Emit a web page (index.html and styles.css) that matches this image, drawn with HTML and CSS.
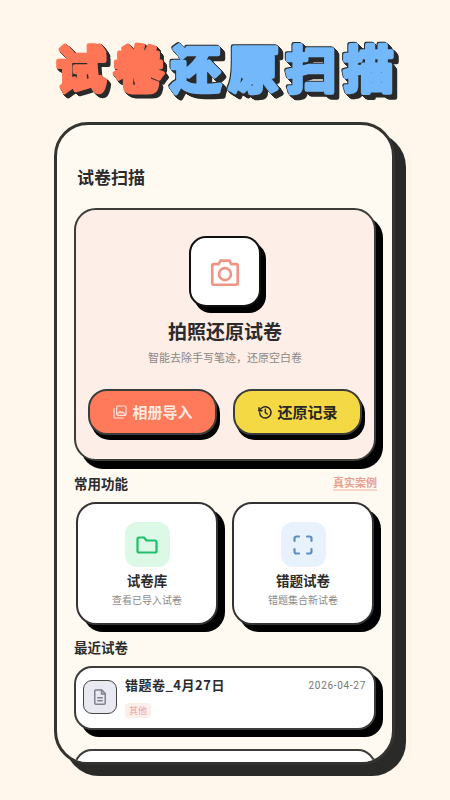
FILE: index.html
```html
<!DOCTYPE html>
<html lang="zh">
<head>
<meta charset="utf-8">
<title>试卷还原扫描</title>
<link rel="stylesheet" href="styles.css">
</head>
<body>
<header class="banner">
  <svg class="banner-art" width="450" height="122" viewBox="0 0 450 122" role="img" aria-label="试卷还原扫描">
    <text class="banner-word word-orange" x="56" y="88">试卷</text>
    <text class="banner-word word-blue" x="171" y="88">还原扫描</text>
  </svg>
</header>
<main class="phone">
  <h2 class="page-title">试卷扫描</h2>
  <section class="hero">
    <div class="hero-icon">
      <svg width="34" height="34" viewBox="0 0 24 24" fill="none" stroke="#ef9583" stroke-width="1.900" stroke-linejoin="round"><path d="M3 7.500a1 1 0 0 1 1-1h3.600l1.200-2.500h6.400l1.200 2.500H20a1 1 0 0 1 1 1V20a1 1 0 0 1-1 1H4a1 1 0 0 1-1-1z"/><circle cx="12" cy="13.500" r="4.200"/></svg>
    </div>
    <h3 class="hero-title">拍照还原试卷</h3>
    <p class="hero-sub">智能去除手写笔迹，还原空白卷</p>
    <div class="hero-actions">
      <button class="btn btn-orange">
        <svg width="16" height="16" viewBox="0 0 24 24" fill="none" stroke="#ffe3d8" stroke-width="1.800" stroke-linejoin="round" stroke-linecap="round"><rect x="7" y="3" width="14" height="14" rx="2"/><path d="M3 7v12a2 2 0 0 0 2 2h12"/><path d="M8 15l4-4 2.500 2.500L16 12l4 4"/></svg>
        相册导入
      </button>
      <button class="btn btn-yellow">
        <svg width="16" height="16" viewBox="0 0 24 24" fill="none" stroke="#262626" stroke-width="2.200" stroke-linejoin="round" stroke-linecap="round"><path d="M4 13a8.500 8.500 0 1 0 2.500-6.500L3 10"/><path d="M3 5.500V10h4.500"/><path d="M12.500 8v5l3 2"/></svg>
        还原记录
      </button>
    </div>
  </section>
  <div class="section-head"><h3 class="section-title">常用功能</h3><span class="section-link">真实案例</span></div>
  <div class="tools">
    <article class="tool">
      <div class="tool-icon tool-green">
        <svg width="24" height="24" viewBox="0 0 24 24" fill="none" stroke="#1fc06a" stroke-width="2.200" stroke-linejoin="round"><path d="M2.500 6a1.500 1.500 0 0 1 1.500-1.500h5l2.500 3H20a1.500 1.500 0 0 1 1.500 1.500v9a1.500 1.500 0 0 1-1.500 1.500H4A1.500 1.500 0 0 1 2.500 18z"/></svg>
      </div>
      <h4 class="tool-title">试卷库</h4>
      <p class="tool-sub">查看已导入试卷</p>
    </article>
    <article class="tool">
      <div class="tool-icon tool-blue">
        <svg width="24" height="24" viewBox="0 0 24 24" fill="none" stroke="#5b8fc4" stroke-width="2.200" stroke-linecap="round" stroke-linejoin="round"><path d="M3.500 8V5.500a2 2 0 0 1 2-2H8"/><path d="M16 3.500h2.500a2 2 0 0 1 2 2V8"/><path d="M20.500 16v2.500a2 2 0 0 1-2 2H16"/><path d="M8 20.500H5.500a2 2 0 0 1-2-2V16"/></svg>
      </div>
      <h4 class="tool-title">错题试卷</h4>
      <p class="tool-sub">错题集合新试卷</p>
    </article>
  </div>
  <h3 class="section-title recent-title">最近试卷</h3>
  <article class="paper">
    <div class="paper-icon">
      <svg width="18" height="18" viewBox="0 0 24 24" fill="none" stroke="#80808f" stroke-width="2" stroke-linejoin="round" stroke-linecap="round"><path d="M6 2.500h8l5 5V20a1.500 1.500 0 0 1-1.500 1.500h-11.500A1.500 1.500 0 0 1 5 20V4a1.500 1.500 0 0 1 1-1.500z"/><path d="M14 2.500V8h5"/><path d="M9 13h6M9 17h6"/></svg>
    </div>
    <div class="paper-body">
      <div class="paper-row"><span class="paper-name">错题卷_4月27日</span><span class="paper-date">2026-04-27</span></div>
      <span class="paper-tag">其他</span>
    </div>
  </article>
  <article class="paper paper-next"></article>
</main>
</body>
</html>
```
FILE: styles.css
```css
* { box-sizing: border-box; }
html, body { margin: 0; padding: 0; }
body {
  width: 450px;
  height: 800px;
  overflow: hidden;
  background: #fff6ec;
  font-family: "Noto Sans CJK SC", "Noto Sans", sans-serif;
  color: #2b2b2b;
}
h1, h2, h3, h4, p { margin: 0; }
.banner { height: 122px; }
.banner-art { display: block; }
.banner-word {
  font-family: "Noto Sans CJK SC", sans-serif;
  font-size: 50px;
  font-weight: 700;
  letter-spacing: 7.500px;
  stroke-width: 4.500px;
  stroke-linejoin: round;
  stroke-linecap: round;
  paint-order: stroke;
}
.word-orange {
  fill: #ff7657;
  stroke: #ff7657;
  filter: drop-shadow(1px 1px 0 #2a2a2a) drop-shadow(1px 1px 0 #2a2a2a) drop-shadow(1px 1px 0 #2a2a2a) drop-shadow(1px 1px 0 #2a2a2a);
}
.word-blue {
  fill: #72b8fb;
  stroke: #72b8fb;
  filter: drop-shadow(-1px -1px 0 #2a2a2a) drop-shadow(1px 1px 0 #2a2a2a) drop-shadow(1px 1px 0 #2a2a2a) drop-shadow(1px 1px 0 #2a2a2a) drop-shadow(1px 1px 0 #2a2a2a) drop-shadow(1px 1px 0 #2a2a2a);
}
.phone {
  width: 341px;
  height: 643px;
  margin-left: 54px;
  padding: 40px 17px 0 17px;
  background: #fffaf1;
  border: 3px solid #33332f;
  border-radius: 34px;
  box-shadow: 11px 11px 0 #2a2a28;
  overflow: hidden;
}
.page-title { font-size: 17px; line-height: 24px; font-weight: 700; margin-left: 3px; }
.hero {
  width: 302px;
  height: 253px;
  margin-top: 19px;
  padding-top: 26px;
  background: #fdeee8;
  border: 2px solid #3c3c3a;
  border-radius: 22px;
  box-shadow: 7px 8px 0 #000;
  display: flex;
  flex-direction: column;
  align-items: center;
}
.hero-icon {
  width: 72px;
  height: 71px;
  background: #fff;
  border: 2px solid #111;
  border-radius: 17px;
  box-shadow: 5px 6px 0 #000;
  display: flex;
  align-items: center;
  justify-content: center;
}
.hero-title { margin-top: 10px; font-size: 19px; line-height: 28px; font-weight: 700; }
.hero-sub { margin-top: 4px; font-size: 11px; line-height: 16px; color: #8c8684; }
.hero-actions { width: 274px; margin-top: 24px; display: flex; justify-content: space-between; }
.btn {
  width: 129px;
  height: 46px;
  border: 2px solid #3c3c3a;
  border-radius: 19px;
  box-shadow: 3px 5px 0 #000;
  font: 700 15px/20px "Noto Sans CJK SC", sans-serif;
  display: flex;
  align-items: center;
  justify-content: center;
  gap: 4px;
  padding: 0;
}
.btn-orange { background: #ff7a5a; color: #ffe9e0; }
.btn-yellow { background: #f4d944; color: #262626; }
.section-head { width: 303px; margin-top: 12px; display: flex; justify-content: space-between; align-items: center; }
.section-title { font-size: 13.500px; line-height: 20px; font-weight: 700; }
.section-link {
  font-size: 11px;
  line-height: 14px;
  font-weight: 700;
  color: #e8a08e;
  border-bottom: 2px solid #f6d5ca;
}
.tools { display: flex; gap: 14px; margin: 9px 0 0 2px; }
.tool {
  width: 142px;
  height: 123px;
  padding-top: 18px;
  background: #fff;
  border: 2px solid #333;
  border-radius: 20px;
  box-shadow: 7px 7px 0 #000;
  display: flex;
  flex-direction: column;
  align-items: center;
}
.tool-icon { width: 45px; height: 45px; border-radius: 12px; display: flex; align-items: center; justify-content: center; }
.tool-green { background: #dcf8e6; }
.tool-blue { background: #e8f2fc; }
.tool-title { margin-top: 3px; font-size: 13.500px; line-height: 20px; font-weight: 700; }
.tool-sub { margin-top: 3px; font-size: 10px; line-height: 14px; color: #8a8a8a; }
.recent-title { margin-top: 12px; }
.paper {
  width: 302px;
  height: 64px;
  margin-top: 9px;
  padding: 12px 8px 12px 7px;
  background: #fff;
  border: 2px solid #3c3c3a;
  border-radius: 18px;
  box-shadow: 7px 7px 0 #000;
  display: flex;
  gap: 8px;
}
.paper-icon {
  width: 34px;
  height: 34px;
  flex: none;
  background: #e9e9f1;
  border: 1.500px solid #444;
  border-radius: 9px;
  display: flex;
  align-items: center;
  justify-content: center;
}
.paper-body { flex: 1; margin-top: -5px; display: flex; flex-direction: column; align-items: flex-start; }
.paper-row { width: 100%; display: flex; justify-content: space-between; align-items: center; height: 20px; }
.paper-name { font-size: 13px; font-weight: 700; line-height: 20px; letter-spacing: 0.500px; }
.paper-date { font-family: "Roboto", sans-serif; font-size: 10px; line-height: 14px; color: #777; letter-spacing: 0.700px; margin-top: 1px; }
.paper-tag {
  margin-top: 8px;
  padding: 0 4px;
  font-size: 9px;
  line-height: 15px;
  color: #e9a59a;
  background: #fdeeea;
  border-radius: 4px;
}
.paper-next { margin-top: 19px; }
```
